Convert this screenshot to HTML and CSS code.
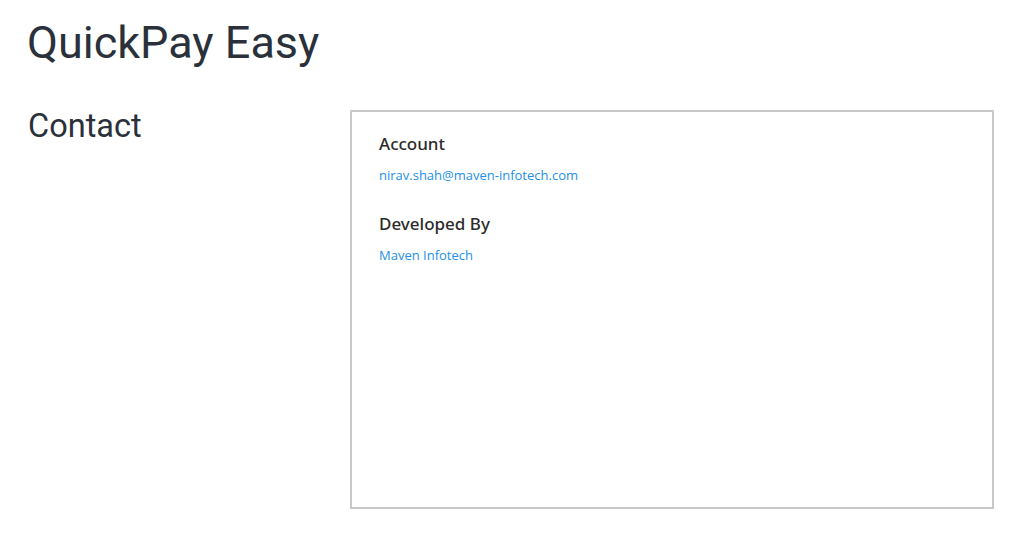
FILE: index.html
```html
<!DOCTYPE html>
<html>
<head>
<meta charset="utf-8">
<link rel="stylesheet" href="styles.css">
</head>
<body>
<h1 class="app-title">QuickPay Easy</h1>
<div class="layout">
  <h2 class="section-title">Contact</h2>
  <div class="card">
    <div class="group">
      <div class="label">Account</div>
      <a class="link" href="#">nirav.shah@maven-infotech.com</a>
    </div>
    <div class="group">
      <div class="label">Developed By</div>
      <a class="link" href="#">Maven Infotech</a>
    </div>
  </div>
</div>
</body>
</html>
```
FILE: styles.css
```css
html, body { margin: 0; padding: 0; background: #fff; }
body { font-family: Roboto, "Noto Sans", sans-serif; color: #2a313b; }
.app-title {
  margin: 0;
  padding: 16px 0 0 27px;
  font-size: 45px;
  font-weight: 400;
  line-height: 54px;
}
.layout {
  display: flex;
  padding: 40px 30px 0 28px;
}
.section-title {
  width: 322px;
  margin: 0;
  font-size: 32.5px;
  font-weight: 400;
  line-height: 28px;
  padding-top: 2px;
}
.card {
  width: 644px;
  height: 399px;
  border: 2px solid #c8c8c8;
  padding: 20px 27px;
  box-sizing: border-box;
  font-family: "Open Sans", "Noto Sans", sans-serif;
}
.group { margin-bottom: 27px; }
.label {
  font-family: "Noto Sans", "Open Sans", sans-serif;
  font-size: 17px;
  font-weight: 500;
  color: #2b2b2b;
  line-height: 24px;
  margin-bottom: 9px;
}
.link {
  display: block;
  font-size: 13px;
  color: #1e90e8;
  text-decoration: none;
  line-height: 20px;
}
```
